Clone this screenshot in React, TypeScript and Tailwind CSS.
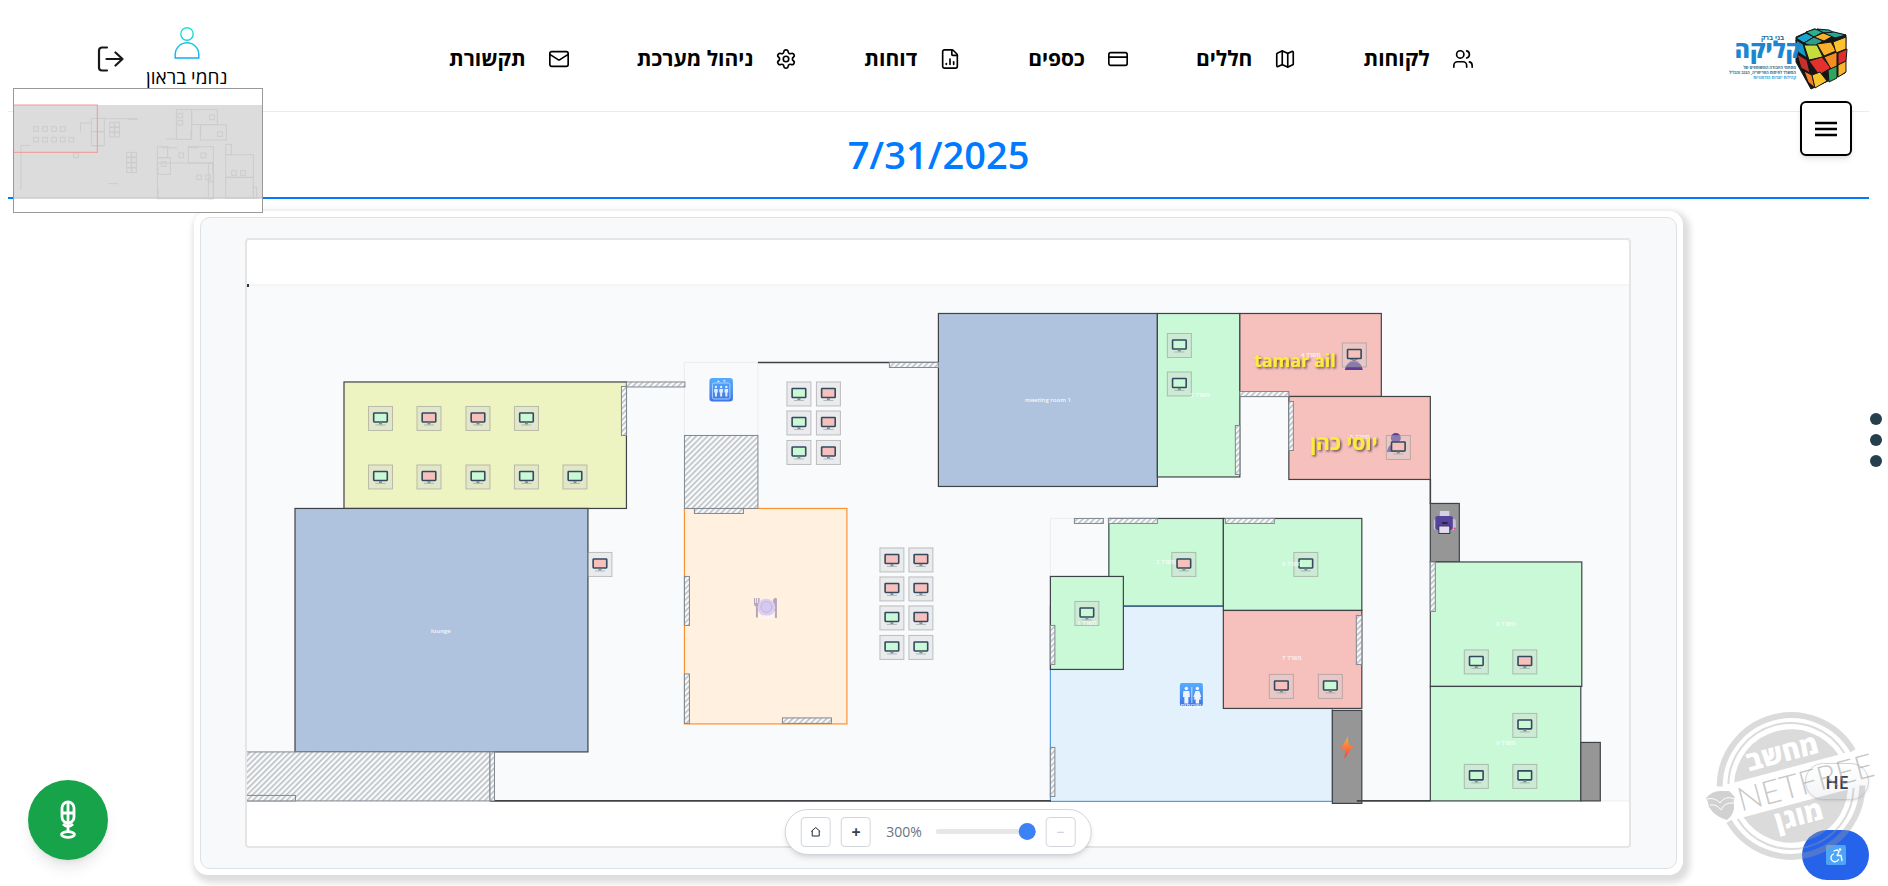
import React from "react";
import { Users, Map as MapIcon, CreditCard, FileChartColumn, Settings, Mail } from "lucide-react";

type Box = [number, number, number, number];

const NAV = [
  { label: "לקוחות", Icon: Users },
  { label: "חללים", Icon: MapIcon },
  { label: "כספים", Icon: CreditCard },
  { label: "דוחות", Icon: FileChartColumn },
  { label: "ניהול מערכת", Icon: Settings },
  { label: "תקשורת", Icon: Mail },
];

const GREEN = "#c9f9d6";
const PINK = "#f6c0bd";
const STEEL = "#b0c3de";
const GRAY = "#969696";
const WALL = "#3f4347";

// Rooms as [left, top, right, bottom, fill, stroke]
const ROOMS: [number, number, number, number, string, string][] = [
  [344, 382, 626.5, 508.5, "#edf4c2", WALL],
  [295, 508.5, 588, 752, STEEL, WALL],
  [684.5, 362.5, 758, 435.5, "#f9fafc", "#eceef0"],
  [684.5, 508.5, 847, 724, "#fff0df", "#fb9130"],
  [938.5, 313.5, 1157.5, 486.5, STEEL, WALL],
  [1157.5, 313.5, 1240, 477, GREEN, WALL],
  [1240, 313.5, 1381.5, 396.5, PINK, WALL],
  [1289, 396.5, 1430.5, 479.5, PINK, WALL],
  [1050.5, 606.5, 1332.5, 801.5, "#e3f1fd", "#4f9be6"],
  [1050.5, 518.5, 1109, 577, "#f9fafc", "#eceef0"],
  [1109, 518.5, 1223.5, 606, GREEN, WALL],
  [1223.5, 518.5, 1362, 610.5, GREEN, WALL],
  [1223.5, 610.5, 1362, 708.5, PINK, WALL],
  [1050.5, 576.5, 1123.5, 669.5, GREEN, WALL],
  [1332.5, 710.5, 1362, 803.5, GRAY, WALL],
  [1430.5, 503.5, 1459.5, 562, GRAY, WALL],
  [1430.5, 562, 1582, 686.5, GREEN, WALL],
  [1430.5, 686.5, 1581, 801, GREEN, WALL],
  [1581, 742.5, 1600.5, 801, GRAY, WALL],
];

const HATCHED: Box[] = [
  [246.5, 752, 490, 801], [246.5, 795.5, 295.5, 801], [490, 752, 494.5, 801],
  [626.5, 382, 685, 387], [621.5, 386.5, 626.5, 435.5],
  [684.5, 435.5, 758, 508.5], [889.5, 362.5, 938.5, 367.5],
  [694.5, 508.5, 743.5, 513.5], [684.5, 576.5, 689.5, 625.5],
  [684.5, 674, 689.5, 723.5], [782.5, 718, 831.5, 723.5],
  [1240, 391.5, 1289, 396.5], [1289, 401.5, 1293.5, 450.5], [1235.5, 425.5, 1240, 474.5],
  [1074.5, 518.5, 1103.5, 523.5], [1108.5, 518.5, 1157.5, 523.5], [1225.5, 518.5, 1274.5, 523.5],
  [1050.5, 625.5, 1055, 664.5], [1050.5, 747.5, 1055, 796.5], [1356.5, 615.5, 1362, 664.5],
  [1430.5, 562, 1435.5, 611.5],
];

const WALLS: Box[] = [
  [758, 362.5, 938.5, 362.5],
  [490, 801, 1051, 801],
  [1357, 801, 1430.5, 801],
  [1430.5, 479, 1430.5, 504],
];

// Desks as [centre x, centre y, taken]
const DESKS: [number, number, boolean][] = [
  [380.5, 418.5, false], [429, 418.5, true], [478, 418.5, true], [526.5, 418.5, false],
  [380.5, 477, false], [429, 477, true], [478, 477, false], [526.5, 477, false], [575, 477, false],
  [600, 564.5, true],
  [799, 394, false], [828.5, 394, true], [799, 423, false], [828.5, 423, true], [799, 452.5, false], [828.5, 452.5, true],
  [892, 560, true], [921, 560, true], [892, 589, true], [921, 589, true],
  [892, 618, false], [921, 618, true], [892, 647.5, false], [921, 647.5, false],
  [1179.5, 345.5, false], [1179.5, 384, false],
  [1354.5, 355, true], [1398.5, 447.5, true],
  [1184, 564.5, true], [1306, 564.5, false], [1087, 613.5, false],
  [1281.5, 686.5, true], [1330.5, 686.5, false],
  [1476.5, 662, false], [1525, 662, true],
  [1525, 725.5, false], [1476.5, 776.5, false], [1525, 776.5, false],
];

const LABELS: [number, number, string][] = [
  [1048, 402, "meeting room 1"], [441, 633, "lounge"],
  [1200, 397, "משרד 3"], [1311, 357, "משרד 4"], [1360, 439, "משרד 5"],
  [1166, 564, "משרד 2"], [1292, 566, "משרד 6"], [1087, 625, "משרד 1"],
  [1292, 660, "משרד 7"], [1506, 626, "משרד 8"], [1506, 745, "משרד 9"],
  [1191, 708, "שירותים"], [766, 619, "מטבח"],
];

function Desk({ x, y, taken }: { x: number; y: number; taken: boolean }) {
  return (
    <g>
      <rect x={x - 12} y={y - 12} width={24} height={24} fill="#d5d5d5" fillOpacity={0.4} stroke="#8a8a8a" strokeOpacity={0.5} />
      <rect x={x - 6.8} y={y - 5.5} width={13.6} height={9} rx={0.6} fill={taken ? PINK : GREEN} stroke="#34495e" strokeWidth={1.6} />
      <rect x={x - 1.5} y={y + 4.2} width={3} height={1.8} fill="#7f8c8d" />
      <rect x={x - 5} y={y + 6} width={10} height={1} fill="#95a5a6" fillOpacity={0.7} />
    </g>
  );
}

function Person({ x, y }: { x: number; y: number }) {
  return (
    <g fill="#5b3f94">
      <circle cx={x} cy={y - 5} r={5} />
      <path d={`M${x - 9} ${y + 9}q1-8 9-9q8 1 9 9z`} />
    </g>
  );
}

function FloorPlan() {
  return (
    <svg role="img" aria-label="floor plan" viewBox="247 240 1382 606" className="block w-full">
      <defs>
        <pattern id="hatch" width="4" height="4" patternUnits="userSpaceOnUse" patternTransform="rotate(45)">
          <rect width="4" height="4" fill="#f8fafb" />
          <rect width="1.5" height="4" fill="#b9bcc0" />
        </pattern>
        <linearGradient id="sign" x2="0" y2="1">
          <stop offset="0" stopColor="#55adff" />
          <stop offset="1" stopColor="#3f74e4" />
        </linearGradient>
        <linearGradient id="bolt" x2="0" y2="1">
          <stop offset="0" stopColor="#ffad3b" />
          <stop offset="1" stopColor="#f4433f" />
        </linearGradient>
        <filter id="drop" x="-20%" y="-20%" width="150%" height="160%">
          <feDropShadow dx="1.5" dy="1.5" stdDeviation="1" floodColor="#000" floodOpacity="0.6" />
        </filter>
      </defs>
      <rect x="246" y="285" width="1384" height="516" fill="#f9fafc" stroke="#eceef0" />
      <rect x="246" y="284" width="3" height="3" fill="#333" />
      {ROOMS.map(([l, t, r, b, fill, stroke], i) => (
        <rect key={i} x={l} y={t} width={r - l} height={b - t} fill={fill} stroke={stroke} strokeWidth={1.2} />
      ))}
      {WALLS.map(([a, b, c, d], i) => (
        <path key={i} d={`M${a} ${b}L${c} ${d}`} stroke={WALL} strokeWidth={1.6} />
      ))}
      {HATCHED.map(([l, t, r, b], i) => (
        <rect key={i} x={l} y={t} width={r - l} height={b - t} fill="url(#hatch)" stroke="#808890" />
      ))}
      <Person x={1354} y={361} />
      <Person x={1396} y={443} />
      {DESKS.map(([x, y, taken], i) => (
        <Desk key={i} x={x} y={y} taken={taken} />
      ))}

      <rect x="709.5" y="378" width="23.5" height="23.5" rx="3" fill="url(#sign)" />
      <rect x="712.5" y="383" width="17.5" height="16" rx="1.5" fill="none" stroke="#a8d2ff" />
      <g fill="#e3ecff">
        {[716, 721.2, 726.4].map((x) => (
          <g key={x}>
            <circle cx={x} cy="387" r="1.2" />
            <path d={`M${x - 1.8} 389h3.6v3.5h-.8v4h-2v-4h-.8z`} />
          </g>
        ))}
        <path d="M717 382l1.5-1.8 1.5 1.8zM723 380.200h3l-1.500 1.800z" />
      </g>

      <rect x="1180" y="683" width="23" height="23" rx="2" fill="url(#sign)" />
      <g fill="#eef4ff">
        <circle cx="1186.500" cy="688.500" r="1.800" />
        <path d="M1183.500 691h6l.5 6h-1.500v6.500h-4v-6.500h-1.500z" />
        <circle cx="1197.500" cy="688.500" r="1.800" />
        <path d="M1195.500 691h4l2 6h-1.300l1 2.500h-2v4h-3.400v-4h-2l1-2.500h-1.300z" />
        <path d="M1191.600 687h.8v16h-.8z" />
      </g>

      <g fill="#b3a7bd">
        <path d="M754 598h1.200v5h1v-5h1v5h1v-5h1.500v6q0 2-1.700 2.500v11h-2v-11q-2-.5-2-2.500z" />
        <path d="M775 598q2-.5 2 1.500v18.500h-2v-7h-2v-10q0-2.500 2-3z" />
      </g>
      <circle cx="766.500" cy="607.500" r="8.800" fill="#dccdf1" />
      <circle cx="766.500" cy="607" r="5.500" fill="#d5c9ef" stroke="#c3b0e2" />

      <path d="M1348 736.500L1340.500 749.500h5L1344.500 759L1353.500 746h-4.500z" fill="url(#bolt)" />

      <path d="M1440 511h9.500v7h-9.500z" fill="#d6cfe2" />
      <rect x="1434" y="519" width="22" height="11" rx="2" fill="#c9bfdb" />
      <rect x="1435.500" y="516" width="17.500" height="14" rx="2" fill="#55449a" />
      <rect x="1442" y="522" width="6" height="2" rx="1" fill="#2b2144" />
      <rect x="1439" y="526" width="11" height="7.500" fill="#e3dcea" stroke="#3c2f60" />
      <circle cx="1454.800" cy="528.500" r="1" fill="#f0366f" />

      <g fill="#fff" fillOpacity="0.9" textAnchor="middle" className="font-['Open_Sans','Noto_Sans',sans-serif] text-[6px] font-semibold">
        {LABELS.map(([x, y, text]) => (
          <text key={text} x={x} y={y}>{text}</text>
        ))}
      </g>
      <g fill="#ffeb3b" filter="url(#drop)" textAnchor="middle" className="font-['Open_Sans','Noto_Sans',sans-serif] font-bold">
        <text x="1295" y="367" className="text-[18px]">tamar ail</text>
        <text x="1344" y="450" className="text-[21px]">יוסי כהן</text>
      </g>
    </svg>
  );
}

const MINI_ROOMS: Box[] = [
  [529, 329, 575, 418], [575, 329, 652, 374], [601, 374, 679, 420],
  [274, 355, 313, 395], [274, 395, 313, 437], [472, 440, 503, 473], [472, 473, 511, 523],
  [565, 440, 640, 489], [472, 489, 640, 596], [625, 489, 640, 545], [625, 545, 640, 596],
  [677, 464, 760, 532], [677, 532, 760, 594], [677, 433, 694, 464], [760, 562, 770, 594],
];
const MINI_DESKS: [number, number][] = [
  [108, 387], [135, 387], [162, 387], [188, 387],
  [108, 419], [135, 419], [162, 419], [188, 419], [214, 419], [228, 466],
  [336, 374], [351, 374], [336, 389], [351, 389], [336, 404], [351, 404],
  [387, 464], [402, 464], [387, 480], [402, 480], [387, 495], [402, 495], [387, 511], [402, 511],
  [541, 347], [541, 368], [636, 352], [660, 402], [544, 466], [610, 466], [491, 492],
  [597, 532], [624, 532], [702, 519], [729, 519],
];
const MINI_WALLS: Box[] = [
  [313, 356, 413, 356], [383, 358, 413, 358], [240, 369, 274, 369], [241, 369, 241, 397],
  [62, 436, 93, 436], [63, 436, 63, 569], [497, 417, 527, 417], [324, 551, 354, 551],
  [484, 443, 531, 443], [567, 443, 595, 443], [573, 390, 573, 418], [602, 376, 602, 406],
  [474, 500, 474, 521], [474, 566, 474, 596], [638, 490, 638, 521], [42, 593, 786, 593], [277, 438, 308, 438],
];

function MiniMap() {
  return (
    <div className="absolute left-[13px] top-[88px] z-20 w-[250px] border border-[#999] bg-white">
      <svg role="img" aria-label="overview" viewBox="42 267 744 369" className="block w-full">
        <rect x="42" y="315" width="744" height="282" fill="#dcdcdc" />
        <g fill="none" stroke="#cccccc" strokeWidth="3">
          {MINI_ROOMS.map(([l, t, r, b], i) => (
            <rect key={i} x={l} y={t} width={r - l} height={b - t} />
          ))}
          {MINI_DESKS.map(([x, y], i) => (
            <rect key={i} x={x - 7} y={y - 7} width={14} height={14} />
          ))}
          {MINI_WALLS.map(([a, b, c, d], i) => (
            <path key={i} d={`M${a} ${b}L${c} ${d}`} />
          ))}
        </g>
        <rect x="40" y="315" width="252" height="142" fill="none" stroke="#f49a9a" strokeWidth="3" />
      </svg>
    </div>
  );
}

function Logo() {
  return (
    <svg role="img" aria-label="קליקה" direction="ltr" viewBox="1720 26 130 66" className="mt-1.5 block h-[66px] w-[130px]">
      <g stroke="#161616" strokeWidth="1" strokeLinejoin="round">
        <path d="M1797 37L1815 29L1847 35L1846 73L1812 89L1797 62z" fill="#161616" />
        <path d="M1797 38l10-5 8 4-10 6z" fill="#1ba4cf" />
        <path d="M1807 32l9-3 8 3-9 5z" fill="#29b08e" />
        <path d="M1818 29l12 1 6 3-11 0z" fill="#1e9fa0" />
        <path d="M1805 43l10-6 9 4-10 6z" fill="#2b9f8b" />
        <path d="M1815 37l9-4 10 3-9 5z" fill="#fbb02a" />
        <path d="M1825 33l10-1 12 3-11 3z" fill="#22a79b" />
        <path d="M1797 40l7 4 4 14-9-6z" fill="#1499c9" />
        <path d="M1805 45l13 0 6 12-14 3z" fill="#c5dc3c" />
        <path d="M1818 44l14-2 5 9-12 5z" fill="#fbb02a" />
        <path d="M1834 42l13-5v12l-10 4z" fill="#fcc32c" />
        <path d="M1810 61l13-4 9 11-12 7z" fill="#e5312d" />
        <path d="M1798 54l10 6 3 13-9-5z" fill="#c6302c" />
        <path d="M1825 57l13-5 0 14-6 3z" fill="#f58b23" />
        <path d="M1839 53l9-4-1 12-8 4z" fill="#de2f2c" />
        <path d="M1805 71l8 4 3 13-7-6z" fill="#f3802a" />
        <path d="M1813 75l8-3 7 9-12 7z" fill="#f7c52e" />
        <path d="M1829 70l9-4v12l-8 4z" fill="#2fa660" />
        <path d="M1839 65l8-4v11l-8 5z" fill="#f9b52b" />
      </g>
      <g className="font-['Open_Sans','Noto_Sans',sans-serif]" textAnchor="end">
        <text x="1785" y="40" fill="#1c6a96" className="text-[7px] font-bold">בני ברק</text>
        <text x="1802" y="58" fill="#1e86d0" className="text-[23px] font-extrabold">קליקה</text>
        <text x="1797" y="69" fill="#1c6a86" className="text-[4px] font-bold">מתחמי העבודה המשותפים של</text>
        <text x="1797" y="74" fill="#1c6a86" className="text-[4px] font-bold">המשרד לפיתוח הפריפריה, הנגב והגליל</text>
        <text x="1797" y="79" fill="#27a3d9" className="text-[4px] font-bold">קהילות יוצרות הזדמנויות</text>
      </g>
    </svg>
  );
}

function Watermark() {
  return (
    <svg aria-hidden="true" viewBox="1700 706 188 160" className="pointer-events-none absolute bottom-5 right-0 z-30 h-40 w-[188px]">
      <g transform="rotate(-15 1791 786)">
        <g fill="none" stroke="#9a9a9a" strokeOpacity="0.36">
          <path d="M1722 768a71.500 71.500 0 0 1 138 0M1722 804a71.500 71.500 0 0 0 138 0" strokeWidth="6" />
          <path d="M1731 768a62.500 62.500 0 0 1 120 0M1731 804a62.500 62.500 0 0 0 120 0" strokeWidth="2" />
        </g>
        <path d="M1737 768a57 57 0 0 1 108 0zM1737 804a57 57 0 0 0 108 0z" fill="#9a9a9a" fillOpacity="0.36" />
        <g className="font-['Open_Sans','Noto_Sans',sans-serif]" textAnchor="middle">
          <text x="1791" y="761" fill="#fff" className="text-[27px] font-extrabold">מחשב</text>
          <text x="1791" y="826" fill="#fff" className="text-[27px] font-extrabold">מוגן</text>
          <text x="1736" y="798" textAnchor="start" fill="#9a9a9a" fillOpacity="0.55" className="font-['Lato',sans-serif] text-[33px] font-light">NETFREE</text>
        </g>
      </g>
      <path d="M1706 798q6-7 14-7h9q6 5 6 8q-2 0-1 5q1 10-7 16q-12-3-18-13q-1-6-3-9z" fill="#9a9a9a" fillOpacity="0.45" />
      <path d="M1707 799q8-2 13 4q5-8 15-4M1710 805q7-1 11 5q3-8 13-7" fill="none" stroke="#fff" />
    </svg>
  );
}

export default function App() {
  const [zoom, setZoom] = React.useState(300);
  const square = "flex size-[30px] items-center justify-center rounded border border-[#d1d5db] bg-white";
  return (
    <div className="relative min-h-screen overflow-hidden bg-white font-['Open_Sans','Noto_Sans',sans-serif] text-black">
      <div className="ml-2 mr-[19px]">
        <header dir="rtl" className="flex h-28 items-center justify-between border-b border-[#ebebeb] pl-[88px] pr-5">
          <Logo />
          <nav className="flex items-center gap-[67px] pr-6 pt-1.5">
            {NAV.map(({ label, Icon }) => (
              <a key={label} href="#" className="flex items-center gap-[22px] text-[21px] font-bold">
                <Icon size={22} strokeWidth={1.8} />
                {label}
              </a>
            ))}
          </nav>
          <div className="flex items-center gap-[22px] pt-1.5">
            <div className="flex flex-col items-center gap-0.5 pt-0.5">
              <svg viewBox="0 0 26 32" className="h-8 w-[26px]" fill="none" stroke="url(#user-tone)" strokeWidth="1.4">
                <defs>
                  <linearGradient id="user-tone" gradientUnits="userSpaceOnUse" x1="0" y1="0" x2="0" y2="32">
                    <stop offset="0" stopColor="#1fe8cf" />
                    <stop offset="1" stopColor="#12abf2" />
                  </linearGradient>
                </defs>
                <circle cx="13" cy="7" r="6.200" />
                <path d="M1.200 31v-3.500a11.800 11.800 0 0 1 23.600 0V31z" />
              </svg>
              <span className="text-[19px] leading-8">נחמי בראון</span>
            </div>
            <button type="button" aria-label="יציאה" className="flex">
              <svg viewBox="0 0 28 28" className="size-7" fill="none" stroke="#18181b" strokeWidth="2.200" strokeLinecap="round" strokeLinejoin="round">
                <path d="M11 2.500H6a3 3 0 0 0-3 3v17a3 3 0 0 0 3 3h5M10.500 14H26.500M19.500 7.500L26.500 14L19.500 20.500" />
              </svg>
            </button>
          </div>
        </header>
        <h1 className="border-b-2 border-[#007bff] pb-4 pt-4 text-center text-[38px] font-semibold leading-[53px] text-[#007bff]">7/31/2025</h1>
        <main className="mx-auto mt-3 w-4/5 rounded-[14px] bg-white p-1.5 shadow-[3px_4px_6px_4px_#dedede]">
          <div className="relative rounded-[10px] border border-[#dee2e6] bg-[#f8f9fb] py-5 pl-11 pr-[45px]">
            <div className="overflow-hidden rounded border-2 border-[#e5e5e5] bg-white">
              <FloorPlan />
            </div>
            <div className="absolute bottom-[13px] left-1/2 flex h-[46px] -translate-x-1/2 items-center rounded-full border border-[#d1d5db] bg-white px-[15px] text-[#374151] shadow-md">
              <button type="button" aria-label="home" className={square} onClick={() => setZoom(100)}>
                <svg viewBox="0 0 10 10" className="size-2.5" fill="none" stroke="#1f2937">
                  <path d="M.5 4.500L5 .5L9.500 4.500M1.500 4v5h7V4" />
                </svg>
              </button>
              <button type="button" className={square + " ml-2.5 text-base font-bold"} onClick={() => setZoom(Math.min(300, zoom + 25))}>+</button>
              <label htmlFor="zoom" className="ml-[15px] text-sm text-[#6b7280]">{zoom}%</label>
              <input
                id="zoom"
                type="range"
                min={50}
                max={300}
                value={zoom}
                onChange={(e) => setZoom(Number(e.target.value))}
                className="ml-3.5 h-[5px] w-[100px] appearance-none rounded-full bg-[#e5e7eb] [&::-webkit-slider-thumb]:size-[17px] [&::-webkit-slider-thumb]:appearance-none [&::-webkit-slider-thumb]:rounded-full [&::-webkit-slider-thumb]:bg-[#3b82f6]"
              />
              <button type="button" className={square + " ml-2.5 text-sm text-[#c5cad1]"} onClick={() => setZoom(Math.max(50, zoom - 25))}>−</button>
            </div>
          </div>
        </main>
      </div>

      <MiniMap />

      <button type="button" aria-label="menu" className="absolute right-9 top-[101px] z-20 flex h-[55px] w-[52px] items-center justify-center rounded-md border-2 border-black bg-white shadow-md">
        <svg viewBox="0 0 22 16" className="h-4 w-[22px]" stroke="#000" strokeWidth="2.400">
          <path d="M0 2H22M0 8H22M0 14H22" />
        </svg>
      </button>

      <div className="absolute right-1.5 top-[413px] flex flex-col gap-[9px]">
        <span className="size-3 rounded-full bg-[#263f4c]" />
        <span className="size-3 rounded-full bg-[#263f4c]" />
        <span className="size-3 rounded-full bg-[#263f4c]" />
      </div>

      <button type="button" aria-label="voice" className="absolute bottom-[26px] left-7 z-20 flex size-20 items-center justify-center rounded-full bg-[#16a34a] shadow-lg">
        <svg viewBox="0 0 24 40" className="h-10 w-6" fill="none" stroke="#fff" strokeWidth="2.800">
          <rect x="6" y="2" width="12" height="21" rx="6" />
          <path d="M12 3v30M6 13h12M7 24q5 5 10 0" />
          <ellipse cx="12" cy="34.500" rx="6.500" ry="2.800" />
        </svg>
      </button>

      <button type="button" className="absolute bottom-[86px] right-[19px] z-20 flex h-[37px] w-16 items-center justify-center rounded-full border border-[#d1d5db] bg-linear-to-b from-white to-[#f3f4f6] text-lg font-semibold text-[#374151] shadow-sm">HE</button>

      <button type="button" aria-label="accessibility" className="absolute bottom-1.5 right-[19px] z-20 flex h-[50px] w-[67px] items-center justify-center rounded-full bg-[#2563eb]">
        <svg viewBox="0 0 20 20" className="size-5" fill="none" stroke="#fff" strokeWidth="1.300" strokeLinecap="round" strokeLinejoin="round">
          <rect width="20" height="20" rx="2" fill="#4fa5f5" stroke="none" />
          <circle cx="14" cy="4.500" r="1.200" fill="#fff" stroke="none" />
          <path d="M8 6l3-1.200 2 2-2 3.700h4l1 5M7.500 9a4 4 0 1 0 5 5.500" />
        </svg>
      </button>

      <Watermark />
    </div>
  );
}
